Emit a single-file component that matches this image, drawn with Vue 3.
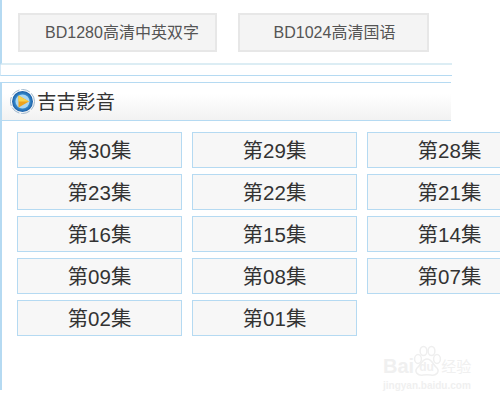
<script setup>
const rows = ['30','29','28','23','22','21','16','15','14','09','08','07','02','01']
</script>

<template>
  <div class="page">
    <section class="sources">
      <a class="source first">BD1280高清中英双字</a>
      <a class="source second">BD1024高清国语</a>
    </section>
    <div class="spacer"></div>
    <section class="panel">
      <header class="head">
        <svg class="logo" width="25" height="25" viewBox="0 0 25 25">
          <defs>
            <radialGradient id="disc" cx="50%" cy="50%" r="50%">
              <stop offset="0" stop-color="#bfe3f7" />
              <stop offset="0.6" stop-color="#3d95d6" />
              <stop offset="1" stop-color="#1b5fa6" />
            </radialGradient>
          </defs>
          <circle cx="12.5" cy="12.5" r="12" fill="none" stroke="#9db6cc" stroke-width="1" stroke-dasharray="9 2" />
          <circle cx="12.5" cy="12.5" r="10.5" fill="url(#disc)" />
          <circle cx="12.5" cy="12.5" r="7" fill="#a9d6f2" />
          <path d="M8.5 6.5 L19 12.5 L8.5 18.5 Z" fill="#eea21c" />
          <path d="M8.5 6.5 L19 12.5 L8.5 12.5 Z" fill="#f8d24c" />
        </svg>
        <span class="brand">吉吉影音</span>
      </header>
      <div class="grid">
        <a v-for="n in rows" :key="n" class="ep">第{{ n }}集</a>
      </div>
    </section>
    <div class="mark">
      <div class="mark-top">
        <span class="bai">Bai</span>
        <span class="paw-wrap">
          <svg class="paw" width="30" height="32" viewBox="0 0 30 32">
            <g fill="none" stroke="#efefef" stroke-width="1.5">
              <ellipse cx="6" cy="14" rx="3.4" ry="4.4" />
              <ellipse cx="11.5" cy="6" rx="3.4" ry="4.6" />
              <ellipse cx="19.5" cy="6" rx="3.4" ry="4.6" />
              <ellipse cx="25" cy="14" rx="3.4" ry="4.4" />
              <path d="M15 14 C10 14 9 20 5 23 C2 27 6 31 11 30 C14 29.5 16 29.5 19 30 C24 31 28 27 25 23 C21 20 20 14 15 14 Z" />
            </g>
          </svg>
          <span class="du">du</span>
        </span>
        <span class="jy">经验</span>
      </div>
      <div class="mark-url">jingyan.baidu.com</div>
    </div>
  </div>
</template>

<style scoped>
.page {
  position: relative;
  width: 500px;
  height: 400px;
  overflow: hidden;
  background: #fff;
  font-family: "Liberation Sans", "Noto Sans CJK SC", sans-serif;
}
.sources {
  box-sizing: border-box;
  width: 452px;
  height: 65px;
  padding: 13px 0 0 16px;
  display: flex;
  gap: 21px;
  align-items: flex-start;
  border-left: 2px solid #b5daf2;
  border-bottom: 2px solid #dcedf4;
}
.source {
  box-sizing: border-box;
  height: 39px;
  padding-bottom: 3px;
  display: flex;
  align-items: center;
  justify-content: center;
  font-size: 16px;
  color: #555;
  background: #f4f4f4;
  border: 2px solid #e7e7e7;
}
.first { width: 199px; padding-left: 9px; }
.second { width: 191px; padding-left: 2px; }
.spacer {
  box-sizing: border-box;
  width: 452px;
  height: 11px;
  border-left: 1px solid #d5e9f6;
  border-bottom: 1px solid #b5daf2;
  margin-bottom: 6px;
}
.panel {
  box-sizing: border-box;
  height: 308px;
  border-left: 2px solid #b5daf2;
}
.head {
  box-sizing: border-box;
  width: 449px;
  height: 39px;
  display: flex;
  align-items: center;
  gap: 2px;
  padding-left: 8px;
  background: linear-gradient(#ffffff 30%, #f2f2f2);
  border-top: 1px solid #b5daf2;
  border-bottom: 1px solid #b5daf2;
}
.logo { flex: none; }
.brand {
  font-size: 19.5px;
  line-height: 24px;
  font-weight: 400;
  color: #333;
}
.grid {
  display: grid;
  grid-template-columns: repeat(3, 165px);
  grid-auto-rows: 36px;
  column-gap: 10px;
  row-gap: 6px;
  padding: 11px 0 0 15px;
}
.ep {
  box-sizing: border-box;
  padding-bottom: 2px;
  display: flex;
  align-items: center;
  justify-content: center;
  font-size: 20.5px;
  color: #333;
  background: #f7f7f7;
  border: 1px solid #b5daf2;
}
.mark {
  position: absolute;
  left: 383px;
  top: 345px;
  width: 100px;
  color: #f0f0f0;
}
.mark-top {
  display: flex;
  align-items: flex-end;
  height: 32px;
  white-space: nowrap;
}
.bai {
  font-size: 20px;
  line-height: 22px;
  font-weight: 700;
}
.paw-wrap {
  position: relative;
  flex: none;
  width: 30px;
  height: 32px;
  margin-left: -2px;
}
.paw { display: block; }
.du {
  position: absolute;
  left: 7px;
  top: 15px;
  font-size: 12px;
  line-height: 14px;
  font-weight: 700;
}
.jy {
  font-size: 15px;
  line-height: 20px;
  margin-left: -1px;
}
.mark-url {
  font-size: 10px;
  line-height: 12px;
  font-weight: 700;
  margin-top: 3px;
  white-space: nowrap;
}
</style>
